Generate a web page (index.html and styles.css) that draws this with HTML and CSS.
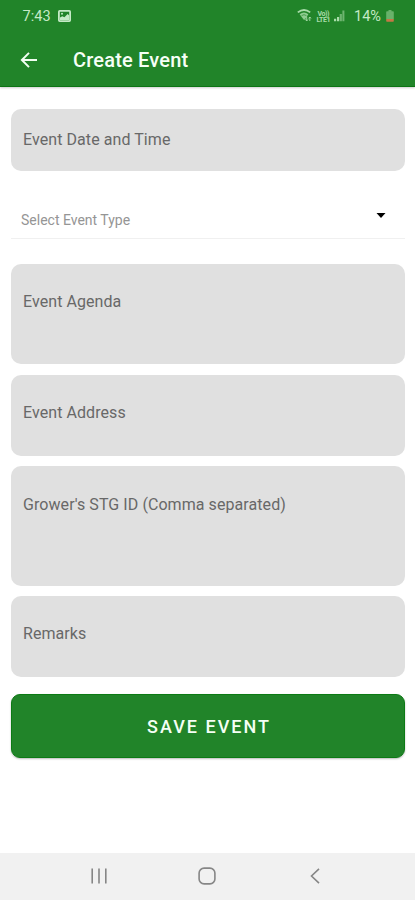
FILE: index.html
```html
<!DOCTYPE html>
<html lang="en">
<head>
<meta charset="utf-8">
<title>Create Event</title>
<link rel="stylesheet" href="styles.css">
</head>
<body>
<div class="screen">
  <header class="top">
    <div class="status">
      <span class="clock">7:43</span>
      <svg class="photo" width="13" height="12" viewBox="0 0 13 12"><rect x=".9" y=".9" width="11.2" height="10.2" rx=".8" fill="none" stroke="#c5eac6" stroke-width="1.8"/><path d="M2 10V7.6l2.3-1.4 2.1 1L9.6 4 11 5.2V10z" fill="#c5eac6"/><circle cx="4" cy="3.8" r="1" fill="#c5eac6"/></svg>
      <svg class="signals" width="50" height="16" viewBox="0 0 50 16">
        <path d="M.8 4.4Q7 -.4 13.2 4.4" fill="none" stroke="#a9dcaa" stroke-width="1.8"/>
        <path d="M2.6 6.3Q7 2.8 11.4 6.3L8 11.2 7 12z" fill="#8fcc91"/><path d="M4.6 7.6Q7 5.8 9.4 7.6" fill="none" stroke="#3f9945" stroke-width=".9"/>
        <path d="M9.7 8.5v4.3M8.4 11.4l1.3 1.6 1.3-1.6M12.8 13V9M11.6 10.4L12.8 9l1.2 1.4" fill="none" stroke="#a9dcaa" stroke-width=".9"/>
        <text x="20.5" y="7.5" class="volte" textLength="12">Vo))</text>
        <text x="19.5" y="14" class="volte" textLength="14">LTE1</text>
        <path d="M37 13.2v-2.4h2.2v2.4zM40 13.2V9h2.2v4.2z" fill="#a9dcaa"/><path d="M42.7 13.2V6h2.2v7.2zM45.4 13.2V2.5h2v10.7z" fill="#6eb570"/>
      </svg>
      <span class="percent">14%</span>
      <svg class="battery" width="8" height="12" viewBox="0 0 8 12"><path d="M2.5 0h3v1.2H7q.8 0 .8.8v7H.2V2q0-.8.8-.8h1.5z" fill="#68b26a"/><path d="M.2 9h7.6v2q0 .8-.8.8H1q-.8 0-.8-.8z" fill="#c57745"/></svg>
    </div>
    <div class="appbar">
      <svg class="back" width="18" height="18" viewBox="0 0 18 18"><path d="M17 9H2.2M9 1.9L1.9 9 9 16.1" fill="none" stroke="#f2fff2" stroke-width="2"/></svg>
      <h1>Create Event</h1>
    </div>
  </header>
  <main class="form">
    <div class="field date"><span>Event Date and Time</span></div>
    <div class="select"><span>Select Event Type</span><svg width="10" height="5" viewBox="0 0 10 5"><path d="M.5 0h9L5 5z" fill="#000"/></svg></div>
    <div class="field agenda"><span>Event Agenda</span></div>
    <div class="field address"><span>Event Address</span></div>
    <div class="field grower"><span>Grower's STG ID (Comma separated)</span></div>
    <div class="field remarks"><span>Remarks</span></div>
    <button class="save">SAVE EVENT</button>
  </main>
  <nav class="navbar">
    <svg width="16" height="16" viewBox="0 0 16 16"><path d="M1.2 .5v15M8 .5v15M14.8 .5v15" stroke="#868686" stroke-width="1.6"/></svg>
    <svg class="home" width="18" height="18" viewBox="0 0 18 18"><rect x="1.1" y="1.1" width="15.8" height="15.8" rx="5" fill="none" stroke="#868686" stroke-width="1.6"/></svg>
    <svg width="10" height="16" viewBox="0 0 10 16"><path d="M9 .8L1.5 8 9 15.2" fill="none" stroke="#868686" stroke-width="1.6"/></svg>
  </nav>
</div>
</body>
</html>
```
FILE: styles.css
```css
* { box-sizing: border-box; }
body { margin: 0; background: #fff; font-family: Roboto, sans-serif; }
svg { display: block; flex: none; }
.screen { width: 415px; height: 900px; display: flex; flex-direction: column; overflow: hidden; }
.top { height: 87px; flex: none; background: #218429; border-bottom: 1px solid #0c7414; box-shadow: 0 1px 2px #0003; }
.status { height: 32px; display: flex; align-items: center; padding-left: 22.5px; color: #c5eac6; font-size: 14.5px; }
.clock { width: 29px; letter-spacing: .1px; }
.photo { margin-left: 6.5px; }
.signals { margin-left: 226px; }
.volte { font: 700 7px Roboto, sans-serif; fill: #a9dcaa; }
.percent { margin-left: 7px; width: 28px; white-space: nowrap; }
.battery { margin-left: 4px; }
.appbar { height: 54px; display: flex; align-items: center; padding: 1px 0 0 20px; }
h1 { margin: 0 0 0 35px; font-size: 20px; line-height: 24px; font-weight: 500; letter-spacing: .18px; color: #f6fff6; white-space: nowrap; }
.form { flex: 1; display: flex; flex-direction: column; padding: 21.5px 10px 0 11px; }
.field { flex: none; background: #e0e0e0; border-radius: 10px; padding: 28px 12px 0; color: #686868; font-size: 16px; line-height: 20px; letter-spacing: .07px; }
.date { height: 62px; padding-top: 21.5px; }
.select { height: 68px; margin-bottom: 25.5px; border-bottom: 1px solid #f0f0f0; display: flex; justify-content: space-between; align-items: flex-start; padding: 40px 19px 0 10px; font-size: 14px; line-height: 18px; color: #959595; }
.select svg { margin-top: 2px; }
.agenda { height: 100px; margin-bottom: 10.5px; }
.address { height: 81px; margin-bottom: 10.5px; }
.grower { height: 119.5px; margin-bottom: 10.5px; padding-top: 28.5px; }
.remarks { height: 81px; margin-bottom: 16.5px; }
.save { flex: none; height: 64.5px; padding: 2px 0 0 2px; border: 1px solid #0c7a14; border-radius: 9px; background: #218429; color: #f4fff4; font: 500 18px Roboto, sans-serif; letter-spacing: 2px; box-shadow: 0 1px 2px #0004; }
.navbar { height: 47.5px; flex: none; background: #f1f1f1; display: flex; align-items: center; justify-content: space-between; padding: 0 95px 0 91px; }
.home { margin-right: 4px; }
```
